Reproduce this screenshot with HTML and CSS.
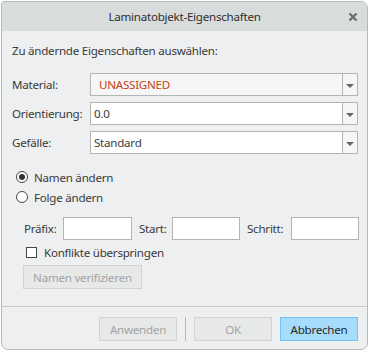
FILE: index.html
```html
<!DOCTYPE html>
<html>
<head>
<meta charset="utf-8">
<link rel="stylesheet" href="styles.css">
</head>
<body>
<div class="dialog">
  <div class="titlebar">
    <span class="title">Laminatobjekt-Eigenschaften</span>
    <svg class="close" width="10" height="10" viewBox="0 0 10 10"><path d="M1.5 1.5 L8.5 8.5 M8.5 1.5 L1.5 8.5" stroke="#6a6a6a" stroke-width="2.2" fill="none"/></svg>
  </div>
  <div class="content">
    <div class="heading">Zu ändernde Eigenschaften auswählen:</div>
    <div class="fields">
      <div class="field">
        <span class="label">Material:</span>
        <div class="combo combo-ro"><span class="value unassigned">UNASSIGNED</span><span class="drop"><i class="arrow"></i></span></div>
      </div>
      <div class="field">
        <span class="label">Orientierung:</span>
        <div class="combo"><span class="value">0.0</span><span class="drop"><i class="arrow"></i></span></div>
      </div>
      <div class="field">
        <span class="label">Gefälle:</span>
        <div class="combo"><span class="value">Standard</span><span class="drop"><i class="arrow"></i></span></div>
      </div>
    </div>
    <div class="radios">
      <div class="radio-row"><span class="radio checked"></span><span>Namen ändern</span></div>
      <div class="radio-row"><span class="radio"></span><span>Folge ändern</span></div>
    </div>
    <div class="naming">
      <span class="nlabel lab-praefix">Präfix:</span><span class="input in-praefix"></span>
      <span class="nlabel lab-start">Start:</span><span class="input in-start"></span>
      <span class="nlabel lab-schritt">Schritt:</span><span class="input in-schritt"></span>
    </div>
    <div class="check-row"><span class="checkbox"></span><span>Konflikte überspringen</span></div>
    <div class="verify"><span class="btn disabled btn-verify">Namen verifizieren</span></div>
  </div>
  <div class="footer">
    <span class="btn disabled">Anwenden</span>
    <span class="vsep"></span>
    <span class="btn disabled">OK</span>
    <span class="btn primary">Abbrechen</span>
  </div>
</div>
</body>
</html>
```

FILE: styles.css
```css
html, body {
  margin: 0;
  padding: 0;
  background: #ffffff;
}
body {
  font-family: "Noto Sans", "Open Sans", sans-serif;
  font-size: 11.6px;
  letter-spacing: -0.25px;
  color: #3a3a3a;
}
.dialog {
  box-sizing: border-box;
  margin: 1px 0 0 1px;
  width: 367px;
  height: 349px;
  border: 1px solid #b9b9b9;
  border-radius: 3px 7px 7px 7px;
  background: #eeeff0;
  display: flex;
  flex-direction: column;
  overflow: hidden;
}
.titlebar {
  height: 29px;
  flex: none;
  background: #d9dcdd;
  display: flex;
  align-items: center;
  justify-content: center;
  position: relative;
}
.title {
  color: #2f2f2f;
}
.close {
  position: absolute;
  right: 9px;
  top: 10px;
}
.content {
  flex: 1;
  padding: 12px 9px 0 10px;
}
.heading {
  line-height: 16px;
  height: 16px;
}
.fields {
  margin-top: 14px;
  display: flex;
  flex-direction: column;
  gap: 6px;
}
.field {
  display: flex;
  align-items: center;
  height: 23px;
}
.label {
  width: 78px;
  flex: none;
}
.combo {
  box-sizing: border-box;
  flex: 1;
  height: 23px;
  border: 1px solid #b4b4b4;
  background: #ffffff;
  display: flex;
  align-items: center;
}
.combo-ro {
  background: #f6f6f6;
}
.value {
  flex: 1;
  padding-left: 3px;
}
.unassigned {
  padding-left: 8px;
  color: #c8400f;
}
.drop {
  box-sizing: border-box;
  width: 15px;
  height: 100%;
  border-left: 1px solid #b4b4b4;
  background: #f6f6f6;
  display: flex;
  align-items: center;
  justify-content: center;
}
.arrow {
  width: 0;
  height: 0;
  border-left: 4px solid transparent;
  border-right: 4px solid transparent;
  border-top: 4px solid #666;
  position: relative;
  top: 1px;
}
.radios {
  margin-top: 15px;
  display: flex;
  flex-direction: column;
  gap: 4px;
}
.radio-row {
  display: flex;
  align-items: center;
  height: 16px;
  gap: 6px;
  padding-left: 4px;
}
.radio {
  box-sizing: border-box;
  width: 12px;
  height: 12px;
  border: 1px solid #454545;
  border-radius: 50%;
  background: #fff;
  display: flex;
  align-items: center;
  justify-content: center;
}
.radio.checked::after {
  content: "";
  width: 6px;
  height: 6px;
  border-radius: 50%;
  background: #333;
}
.naming {
  margin-top: 12px;
  display: flex;
  align-items: center;
  height: 23px;
  padding-left: 12px;
}
.nlabel {
  flex: none;
}
.input {
  box-sizing: border-box;
  height: 23px;
  border: 1px solid #b4b4b4;
  background: #fff;
  flex: none;
}
.lab-praefix { width: 39px; }
.in-praefix { width: 69px; }
.lab-start { width: 33px; margin-left: 7px; }
.in-start { width: 68px; }
.lab-schritt { width: 44px; margin-left: 7px; }
.in-schritt { width: 68px; }
.check-row {
  margin-top: 5px;
  display: flex;
  align-items: center;
  height: 14px;
  padding-left: 14px;
  gap: 7px;
}
.checkbox {
  box-sizing: border-box;
  width: 11px;
  height: 11px;
  border: 1px solid #454545;
  background: #fff;
}
.verify {
  margin-top: 6px;
  padding-left: 11px;
  display: flex;
}
.btn {
  box-sizing: border-box;
  height: 24px;
  width: 78px;
  display: flex;
  align-items: center;
  justify-content: center;
  border: 1px solid #c9c9c9;
  background: #e6e6e6;
  color: #333;
}
.btn.disabled {
  color: #a3a3a3;
  border-color: #d2d2d2;
  background: #e7e8e8;
}
.btn-verify {
  width: 119px;
}
.btn.primary {
  background: #a6dcfb;
  border-color: #71c3f3;
  color: #2a2a2a;
}
.footer {
  flex: none;
  height: 43px;
  border-top: 1px solid #c9c9c9;
  display: flex;
  align-items: flex-start;
  justify-content: flex-end;
  padding: 10px 9px 0 0;
  box-sizing: border-box;
  gap: 8px;
}
.vsep {
  width: 1px;
  height: 24px;
  background: #b6b6b6;
}
```
